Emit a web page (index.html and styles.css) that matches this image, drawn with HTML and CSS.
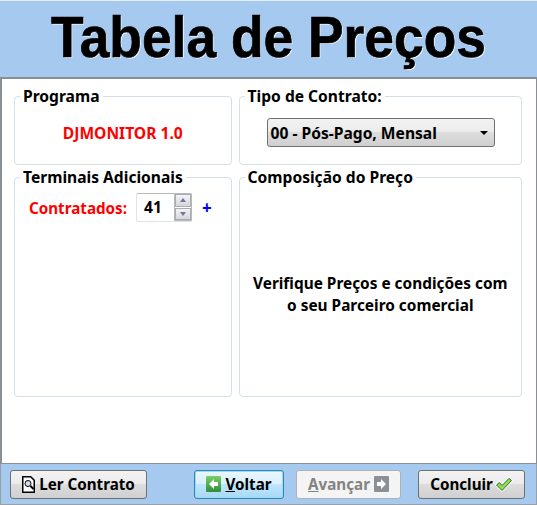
FILE: index.html
```html
<!DOCTYPE html>
<html lang="pt">
<head>
    <meta charset="UTF-8">
    <title>Tabela de Preços</title>
    <link rel="stylesheet" href="styles.css">
</head>
<body>
    <header class="banner">
        <h1>Tabela de Preços</h1>
    </header>

    <main class="content">
        <div class="column column-left">
            <fieldset class="group group-short">
                <legend>Programa</legend>
                <div class="program-name">DJMONITOR 1.0</div>
            </fieldset>
            <fieldset class="group group-tall">
                <legend>Terminais Adicionais</legend>
                <div class="terminals">
                    <span class="terminals-label">Contratados:</span>
                    <div class="spinner">
                        <span class="spinner-value">41</span>
                        <div class="spinner-buttons">
                            <span class="spin-btn"><i class="arrow-up"></i></span>
                            <span class="spin-btn"><i class="arrow-down"></i></span>
                        </div>
                    </div>
                    <span class="plus">+</span>
                </div>
            </fieldset>
        </div>
        <div class="column column-right">
            <fieldset class="group group-short">
                <legend>Tipo de Contrato:</legend>
                <div class="combo">
                    <span>00 - Pós-Pago, Mensal</span>
                    <i class="arrow-down combo-arrow"></i>
                </div>
            </fieldset>
            <fieldset class="group group-tall">
                <legend>Composição do Preço</legend>
                <p class="notice">Verifique Preços e condições com<br>o seu Parceiro comercial</p>
            </fieldset>
        </div>
    </main>

    <footer class="toolbar">
        <button class="btn btn-read">
            <svg width="13" height="17" viewBox="0 0 13 17">
                <path d="M.75 .75h8l3.500 3.500v12H.75z" fill="#fff" stroke="#000" stroke-width="1.500"/>
                <circle cx="6" cy="7.500" r="3" fill="#cfe0ee" stroke="#000"/>
                <path d="M8.500 10l3 3" stroke="#000" stroke-width="2"/>
            </svg>
            Ler Contrato
        </button>
        <div class="nav-buttons">
            <button class="btn btn-back">
                <svg width="15" height="16" viewBox="0 0 15 16">
                    <defs>
                        <linearGradient id="greenFill" x1="0" y1="0" x2="0" y2="1">
                            <stop offset="0" stop-color="#7ccf6a"/>
                            <stop offset="1" stop-color="#2f8f3a"/>
                        </linearGradient>
                    </defs>
                    <rect width="15" height="16" rx="1" fill="url(#greenFill)"/>
                    <path d="M8 3L3 8l5 5v-3h4V6H8z" fill="#fff"/>
                </svg>
                <span><u>V</u>oltar</span>
            </button>
            <button class="btn btn-next">
                <span><u>A</u>vançar</span>
                <svg width="15" height="16" viewBox="0 0 15 16">
                    <rect width="15" height="16" rx="1" fill="#8a9096"/>
                    <path d="M7 3l5 5-5 5v-3H3V6h4z" fill="#fff"/>
                </svg>
            </button>
        </div>
        <button class="btn btn-finish">
            Concluir
            <svg width="18" height="15" viewBox="0 0 18 15">
                <path d="M1.500 8l3-2.500 2.500 3L14 1.500 16.500 3.500 7 13.500z" fill="#8fdc5a" stroke="#fff" stroke-width="2.500" stroke-linejoin="round"/>
                <path d="M1.500 8l3-2.500 2.500 3L14 1.500 16.500 3.500 7 13.500z" fill="#8fdc5a" stroke="#2f6b1e" stroke-linejoin="round"/>
            </svg>
        </button>
    </footer>
</body>
</html>
```

FILE: styles.css
```css
* {
    box-sizing: border-box;
}
html, body {
    height: 100%;
}
body {
    margin: 0;
    display: flex;
    flex-direction: column;
    font-family: "Noto Sans", "Open Sans", sans-serif;
    font-weight: bold;
    color: #000;
    background-color: #a6c9ef;
    border-top: 1px solid #e8eef5;
}
.banner {
    height: 76px;
    flex: none;
    text-align: center;
}
h1 {
    margin: 0;
    padding-top: 2px;
    font-family: "Liberation Sans", Arial, sans-serif;
    font-size: 58px;
    line-height: 68px;
    font-weight: bold;
    white-space: nowrap;
    -webkit-text-stroke: 0.7px #000;
    text-shadow: 1px 1px 0 #fff;
    transform: scaleX(0.92);
}
.content {
    height: 387px;
    flex: none;
    display: flex;
    gap: 7px;
    padding: 9px 14px 0;
    background-color: #fff;
    border: 1px solid #8a8f96;
    border-top-width: 2px;
    border-left-width: 2px;
}
.column {
    display: flex;
    flex-direction: column;
    gap: 4px;
}
.column-left {
    width: 218px;
    margin-left: -2px;
}
.column-right {
    width: 284px;
}
.group {
    margin: 0;
    padding: 0;
    min-width: 0;
    border: 1px solid #d5dfe5;
    border-radius: 4px;
}
.group legend {
    margin-left: 5px;
    padding: 0 3px;
    line-height: 17px;
    font-size: 15.6px;
}
.group-short {
    height: 77px;
}
.group-tall {
    height: 228px;
}
.program-name {
    margin-top: 17px;
    text-align: center;
    color: #ff0000;
    font-size: 15.6px;
}
.terminals {
    display: flex;
    align-items: center;
    padding: 7px 0 0 14px;
}
.terminals-label {
    color: #ff0000;
    font-size: 15.2px;
    width: 107px;
}
.spinner {
    width: 56px;
    height: 29px;
    display: flex;
    justify-content: space-between;
    border: 1px solid #b5b9bd;
    border-left-color: #dde3e8;
    border-bottom-color: #dde3e8;
    border-radius: 2px;
}
.spinner-value {
    padding-left: 7px;
    line-height: 27px;
    font-size: 15.6px;
}
.spinner-buttons {
    display: flex;
    flex-direction: column;
    gap: 1px;
    width: 17px;
    border: 1px solid #b5b9bd;
    border-width: 0 0 1px 1px;
}
.spin-btn {
    flex: 1;
    display: flex;
    align-items: center;
    justify-content: center;
    border: 1px solid #a9adb1;
    background: linear-gradient(#f4f4f4, #d6d6d6);
}
.arrow-up, .arrow-down {
    width: 0;
    height: 0;
    border-left: 3px solid transparent;
    border-right: 3px solid transparent;
}
.arrow-up {
    border-bottom: 4px solid #6a77a8;
}
.arrow-down {
    border-top: 4px solid #6a77a8;
}
.plus {
    margin-left: 10px;
    color: #0000ff;
    font-size: 17px;
}
.combo {
    width: 228px;
    height: 29px;
    margin: 13px 0 0 27px;
    padding: 0 6px 0 3px;
    display: flex;
    align-items: center;
    justify-content: space-between;
    font-size: 15.6px;
    border: 1px solid #707070;
    border-radius: 3px;
    background: linear-gradient(#f2f2f2 0, #ebebeb 50%, #dddddd 50%, #cfcfcf 100%);
}
.combo-arrow {
    border-left-width: 4px;
    border-right-width: 4px;
    border-top: 4px solid #000;
}
.notice {
    margin: 87px 0 0;
    text-align: center;
    font-size: 15.4px;
    line-height: 22px;
}
.toolbar {
    flex: 1;
    display: flex;
    align-items: center;
    padding: 0 0 0 9px;
    border: 1px solid #9aa0a6;
    border-top: none;
}
.nav-buttons {
    display: flex;
    gap: 12px;
    margin-left: 47px;
}
.btn {
    height: 29px;
    display: flex;
    align-items: center;
    justify-content: center;
    gap: 4px;
    padding: 0;
    font-family: inherit;
    font-weight: bold;
    font-size: 15.2px;
    color: #000;
    border: 1px solid #707070;
    border-radius: 3px;
    background: linear-gradient(#f2f2f2 0, #ebebeb 50%, #dddddd 50%, #cfcfcf 100%);
}
.btn-read {
    width: 137px;
}
.btn-back {
    width: 90px;
    border-color: #3c7fb1;
    box-shadow: inset 0 0 0 1px #8fe0f5;
    background: linear-gradient(#eaf6fd 0, #d9f0fc 50%, #bee6fd 50%, #a7d9f5 100%);
}
.btn-next {
    width: 105px;
    color: #838383;
    border-color: #adb2b5;
    background: #f4f4f4;
}
.btn-finish {
    width: 107px;
    margin-left: 17px;
    gap: 2px;
}
```
